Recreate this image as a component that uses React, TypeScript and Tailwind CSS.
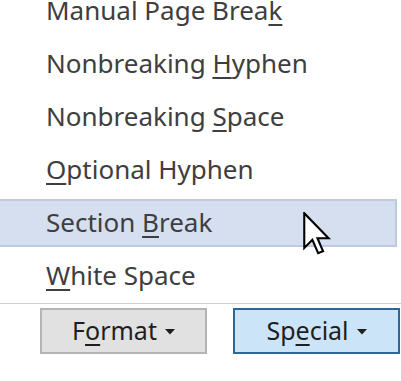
import React from 'react';

const items: { before: string; key: string; after: string }[] = [
  { before: 'Manual Page Brea', key: 'k', after: '' },
  { before: 'Nonbreaking ', key: 'H', after: 'yphen' },
  { before: 'Nonbreaking ', key: 'S', after: 'pace' },
  { before: '', key: 'O', after: 'ptional Hyphen' },
  { before: 'Section ', key: 'B', after: 'reak' },
  { before: '', key: 'W', after: 'hite Space' },
];

const Cursor = () => (
  <svg width="30" height="44" viewBox="0 0 12 19" className="absolute left-[302px] top-[16px]">
    <path
      d="M0.5 0.5 L0.5 15.5 L4 12 L6.5 17.8 L8.6 16.9 L6.2 11.3 L11 11.3 Z"
      fill="white"
      stroke="black"
      strokeWidth="0.9"
      strokeLinejoin="miter"
    />
  </svg>
);

const Caret = () => (
  <svg width="10" height="6" viewBox="0 0 10 6" className="ml-[8px] mt-[2px]">
    <path d="M0 0 L10 0 L5 5.5 Z" fill="#1e1e1e" />
  </svg>
);

export default function App() {
  return (
    <div
      className="w-[401px] h-[381px] bg-white overflow-hidden text-[#3e3e3e]"
      style={{ fontFamily: '"Noto Sans", "Open Sans", sans-serif' }}
    >
      <ul className="mt-[-16px]">
        {items.map((it, i) => {
          const active = i === 4;
          return (
            <li key={i} className="h-[53px] flex items-center relative">
              {active && (
                <div className="absolute left-[-2px] right-[4px] top-[3px] bottom-[2px] bg-[#d5dff0] border-2 border-[#bccbe2]" />
              )}
              <span className="relative pl-[46px] text-[26px] leading-none mt-[-2px]">
                {it.before}
                <span className="underline underline-offset-[4px] decoration-[1.5px]">{it.key}</span>
                {it.after}
              </span>
              {active && <Cursor />}
            </li>
          );
        })}
      </ul>
      <div className="h-px bg-[#d0d0d0] mt-[1px]" />
      <div className="flex gap-[26px] pl-[40px] pt-[4px]">
        <button className="w-[167px] h-[46px] bg-[#e1e1e1] border-2 border-[#b4b4b4] flex items-center justify-center text-[25px] text-[#1e1e1e]">
          F<span className="underline underline-offset-[4px]">o</span>rmat
          <Caret />
        </button>
        <button className="w-[167px] h-[46px] bg-[#cce4f7] border-2 border-[#2f6597] flex items-center justify-center text-[25px] text-[#1e1e1e]">
          Sp<span className="underline underline-offset-[4px]">e</span>cial
          <Caret />
        </button>
      </div>
    </div>
  );
}
